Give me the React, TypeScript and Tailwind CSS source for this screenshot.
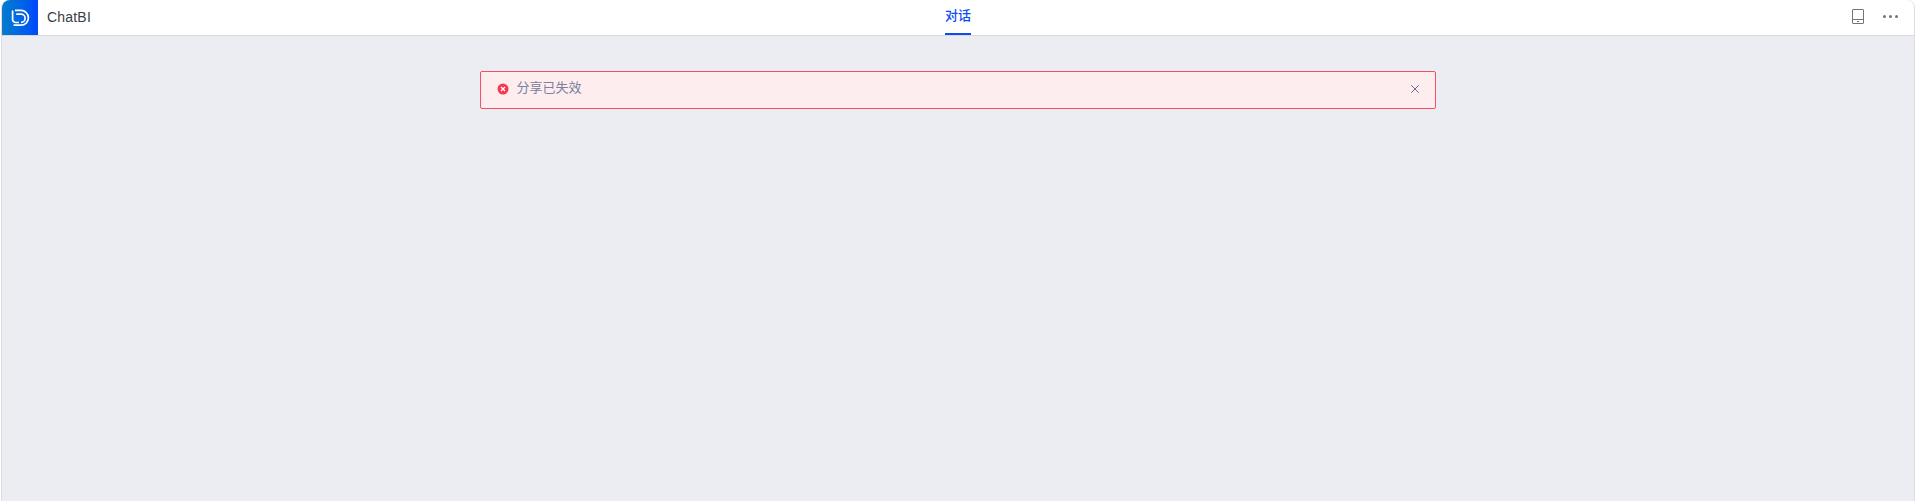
import React from 'react';
import { X } from 'lucide-react';

const font = 'font-["Liberation_Sans","Noto_Sans_CJK_SC",sans-serif]';

const Logo: React.FC = () => (
  <div className="w-9 h-full rounded-tl-lg bg-linear-to-r from-[#0c7ccb] to-[#0846fd] flex items-center justify-center">
    <svg width="20" height="20" viewBox="0 0 20 20" fill="none" stroke="#fff" strokeWidth="1.7" className="ml-px">
      <path d="M1.6 2.5v9a3 3 0 0 0 3 3h3.4" />
      <path d="M4 2.4h6a7.4 7.4 0 0 1 0 14.8H2.6" />
      <path d="M5.2 6.2h4.8a4.1 4.1 0 0 1 0 8.2" />
    </svg>
  </div>
);

const App: React.FC = () => {
  return (
    <div className={`w-[1918px] h-[501px] bg-white pl-px pr-[3px] ${font}`}>
      <div className="h-full flex flex-col border-x border-[#dcdde2] rounded-t-lg bg-[#ecedf2]">
        <header className="h-[36px] shrink-0 grid grid-cols-[1fr_auto_1fr] items-center bg-white border-b border-[#d8d9de] rounded-t-lg">
          <div className="h-full flex items-center">
            <Logo />
            <span className="ml-[9px] text-[14px] tracking-[0.2px] text-[#3a3d44] -mt-px">ChatBI</span>
          </div>
          <nav className="h-full flex items-center">
            <a className="h-full flex items-center text-[13px] font-medium text-[#0d4bf5] border-b-2 border-[#0d4bf5] pb-px">
              对话
            </a>
          </nav>
          <div className="h-full flex items-center justify-end gap-[19px] pr-[16px] pb-[3px]">
            <svg width="12" height="15" viewBox="0 0 12 15" fill="none" stroke="#70747c" strokeWidth="1">
              <rect x="0.5" y="0.5" width="11" height="14" rx="0.5" />
              <path d="M0.5 10.5h11" />
              <path d="M5 12.5h2" />
            </svg>
            <div className="flex gap-[3px]">
              <span className="w-[3px] h-[3px] rounded-full bg-[#70747c]" />
              <span className="w-[3px] h-[3px] rounded-full bg-[#70747c]" />
              <span className="w-[3px] h-[3px] rounded-full bg-[#70747c]" />
            </div>
          </div>
        </header>
        <main className="flex-1 pt-[35px] pr-px flex justify-center">
          <div className="w-[956px] h-[38px] flex items-center pl-[16px] pr-[13px] bg-[#fdedef] border border-[#f54f63] rounded-[2px]">
            <svg width="12" height="12" viewBox="0 0 12 12" className="shrink-0 -mt-[3px]">
              <circle cx="6" cy="6" r="5.5" fill="#f5394f" />
              <path d="M4 4l4 4M8 4l-4 4" stroke="#fff" strokeWidth="1.2" />
            </svg>
            <span className="ml-[8px] flex-1 text-[13px] text-[#7b809c] -mt-1">分享已失效</span>
            <X size={14} stroke="#666c88" strokeWidth={1.7} className="-mt-[3px]" />
          </div>
        </main>
      </div>
    </div>
  );
};

export default App;
